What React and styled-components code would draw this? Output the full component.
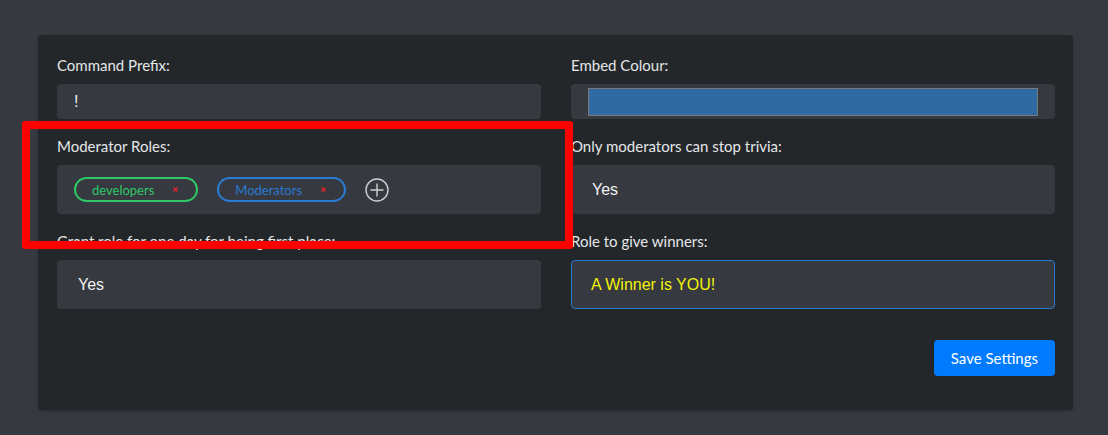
import React from 'react';
import styled, { createGlobalStyle } from 'styled-components';

const GlobalStyle = createGlobalStyle`
  html, body {
    margin: 0;
    padding: 0;
    background-color: #36393f;
  }
  * {
    box-sizing: border-box;
  }
`;

const Page = styled.div`
  position: relative;
  width: 1108px;
  height: 435px;
  padding: 35px 35px 0 38px;
  background-color: #36393f;
  font-family: Lato, "Open Sans", sans-serif;
`;

const Card = styled.div`
  background-color: #23272a;
  border-radius: 4px;
  box-shadow: 0 1px 3px rgba(0, 0, 0, 0.25);
  padding: 19px 18px 34px 19px;
`;

const Grid = styled.div`
  display: grid;
  grid-template-columns: 484px 484px;
  column-gap: 30px;
  row-gap: 16px;
`;

const Group = styled.div`
  display: flex;
  flex-direction: column;
`;

const Label = styled.label`
  height: 22px;
  line-height: 22px;
  margin-bottom: 8px;
  font-size: 15px;
  color: #e4e6e8;
  white-space: nowrap;
`;

const Field = styled.div`
  display: flex;
  align-items: center;
  height: ${p => (p.$tall ? '49px' : '35px')};
  padding: 0 ${p => p.$pad || 16}px;
  background-color: #36393f;
  border: 1px solid ${p => (p.$focus ? '#2a7ad3' : 'transparent')};
  border-radius: 4px;
  font-family: "Liberation Sans", Arial, sans-serif;
  font-size: 16px;
  color: ${p => p.$color || '#f1f1f1'};
`;

const Swatch = styled.div`
  flex: 1;
  height: 28px;
  margin-top: 1px;
  background-color: #306aa3;
  border: 1px solid #7a7a7a;
`;

const Tag = styled.div`
  display: flex;
  align-items: center;
  height: 25px;
  padding: 0 18px 0 16px;
  margin-right: 19px;
  border: 2px solid ${p => p.$color};
  border-radius: 13px;
  color: ${p => p.$color};
  font-family: Lato, "Open Sans", sans-serif;
  font-size: 13px;
`;

const TagClose = styled.svg`
  margin-left: 19px;
  width: 5px;
  height: 5px;
`;

const AddButton = styled.svg`
  width: 24px;
  height: 24px;
  display: block;
`;

const Footer = styled.div`
  display: flex;
  justify-content: flex-end;
  margin-top: 31px;
`;

const SaveButton = styled.button`
  height: 36px;
  padding: 0 17px;
  background-color: #007bff;
  border: none;
  border-radius: 4px;
  color: #ffffff;
  font-family: Lato, "Open Sans", sans-serif;
  font-size: 15px;
  cursor: pointer;
`;

const Highlight = styled.div`
  position: absolute;
  left: 22px;
  top: 121px;
  width: 551px;
  height: 128px;
  border: 8px solid #ff0000;
  border-radius: 3px;
  pointer-events: none;
`;

const roles = [
  { name: 'developers', color: '#2ec866' },
  { name: 'Moderators', color: '#2a7ad3' },
];

const RoleTag = ({ name, color }) => (
  <Tag $color={color}>
    {name}
    <TagClose viewBox="0 0 5 5">
      <path d="M0.5 0.5 L4.5 4.5 M4.5 0.5 L0.5 4.5" stroke="#e3262c" strokeWidth="1.4" />
    </TagClose>
  </Tag>
);

const App = () => (
  <>
    <GlobalStyle />
    <Page>
      <Card>
        <Grid>
          <Group>
            <Label>Command Prefix:</Label>
            <Field>!</Field>
          </Group>
          <Group>
            <Label>Embed Colour:</Label>
            <Field>
              <Swatch />
            </Field>
          </Group>
          <Group>
            <Label>Moderator Roles:</Label>
            <Field $tall>
              {roles.map(r => (
                <RoleTag key={r.name} {...r} />
              ))}
              <AddButton viewBox="0 0 24 24">
                <circle cx="12" cy="12" r="11" fill="none" stroke="#cfcfcf" strokeWidth="1.4" />
                <path d="M12 5.5 V18.5 M5.5 12 H18.5" stroke="#cfcfcf" strokeWidth="1.4" />
              </AddButton>
            </Field>
          </Group>
          <Group>
            <Label>Only moderators can stop trivia:</Label>
            <Field $tall $pad={20}>Yes</Field>
          </Group>
          <Group>
            <Label>Grant role for one day for being first place:</Label>
            <Field $tall $pad={20}>Yes</Field>
          </Group>
          <Group>
            <Label>Role to give winners:</Label>
            <Field $tall $pad={19} $focus $color="#f2f20a">A Winner is YOU!</Field>
          </Group>
        </Grid>
        <Footer>
          <SaveButton>Save Settings</SaveButton>
        </Footer>
      </Card>
      <Highlight />
    </Page>
  </>
);

export default App;
